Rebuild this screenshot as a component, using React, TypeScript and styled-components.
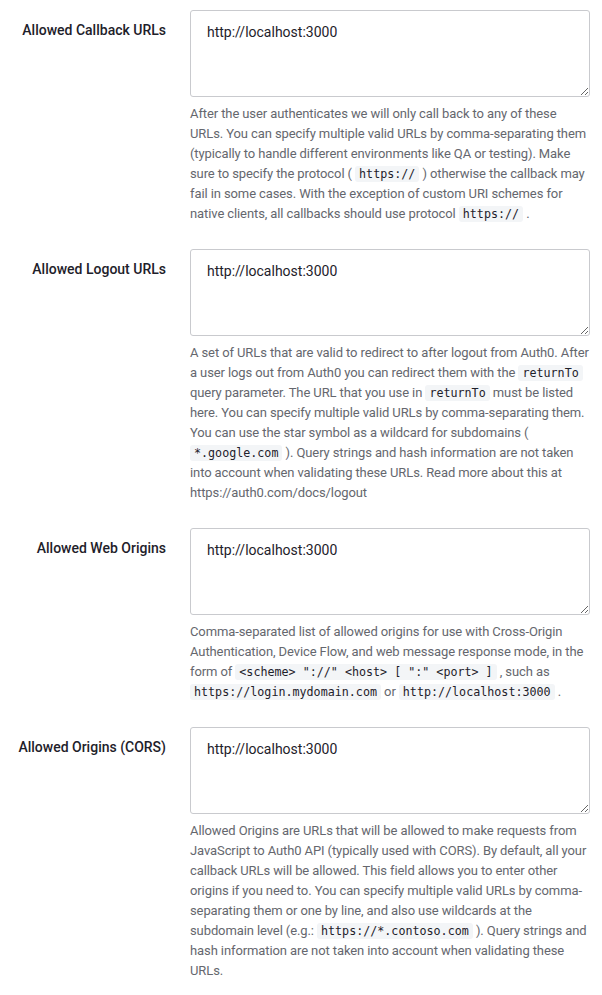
import React from "react";
import styled, { createGlobalStyle } from "styled-components";

const Global = createGlobalStyle`
  html, body { margin: 0; padding: 0; background: #fff; }
  body { font-family: Roboto, "Noto Sans", sans-serif; -webkit-font-smoothing: antialiased; }
`;

const Page = styled.div`
  padding-top: 10px;
  display: flex;
  flex-direction: column;
  gap: 25px;
`;

const Row = styled.div`
  display: grid;
  grid-template-columns: 166px 400px;
  column-gap: 24px;
  align-items: start;
`;

const Label = styled.label`
  text-align: right;
  font-size: 14px;
  font-weight: 500;
  line-height: 20px;
  color: #1e212a;
  padding-top: 10px;
  white-space: nowrap;
`;

const Field = styled.div`
  display: flex;
  flex-direction: column;
  gap: 7px;
`;

const Area = styled.textarea`
  box-sizing: border-box;
  width: 400px;
  height: 87px;
  margin: 0;
  padding: 11px 16px;
  border: 1px solid #c9cace;
  border-radius: 3px;
  font-family: Roboto, "Noto Sans", sans-serif;
  font-size: 14px;
  line-height: 20px;
  color: #1e212a;
  resize: vertical;
  outline: none;
`;

const Help = styled.p`
  margin: 0;
  font-size: 13px;
  letter-spacing: -0.1px;
  line-height: 20px;
  color: #65676e;
`;

const Code = styled.code`
  font-family: "DejaVu Sans Mono", "Liberation Mono", monospace;
  font-size: 11.7px;
  letter-spacing: 0;
  line-height: 16px;
  color: #1e212a;
  background: #f3f5f7;
  padding: 1px 4px;
  border-radius: 3px;
`;

const rows: { label: string; help: React.ReactNode }[] = [
  {
    label: "Allowed Callback URLs",
    help: (
      <>
        After the user authenticates we will only call back to any of these URLs. You can specify
        multiple valid URLs by comma-separating them (typically to handle different environments
        like QA or testing). Make sure to specify the protocol ( <Code>https://</Code> ) otherwise
        the callback may fail in some cases. With the exception of custom URI schemes for native
        clients, all callbacks should use protocol <Code>https://</Code> .
      </>
    ),
  },
  {
    label: "Allowed Logout URLs",
    help: (
      <>
        A set of URLs that are valid to redirect to after logout from Auth0. After a user logs out
        from Auth0 you can redirect them with the <Code>returnTo</Code> query parameter. The URL
        that you use in <Code>returnTo</Code> must be listed here. You can specify multiple valid
        URLs by comma-separating them. You can use the star symbol as a wildcard for subdomains ({" "}
        <Code>*.google.com</Code> ). Query strings and hash information are not taken into account
        when validating these URLs. Read more about this at https://auth0.com/docs/logout
      </>
    ),
  },
  {
    label: "Allowed Web Origins",
    help: (
      <>
        Comma-separated list of allowed origins for use with Cross-Origin Authentication, Device
        Flow, and web message response mode, in the form of{" "}
        <Code>&lt;scheme&gt; "://" &lt;host&gt; [ ":" &lt;port&gt; ]</Code> , such as{" "}
        <Code>https://login.mydomain.com</Code> or <Code>http://localhost:3000</Code> .
      </>
    ),
  },
  {
    label: "Allowed Origins (CORS)",
    help: (
      <>
        Allowed Origins are URLs that will be allowed to make requests from JavaScript to Auth0 API
        (typically used with CORS). By default, all your callback URLs will be allowed. This field
        allows you to enter other origins if you need to. You can specify multiple valid URLs by
        comma-separating them or one by line, and also use wildcards at the subdomain level (e.g.:{" "}
        <Code>https://*.contoso.com</Code> ). Query strings and hash information are not taken into
        account when validating these URLs.
      </>
    ),
  },
];

export default function App() {
  return (
    <>
      <Global />
      <Page>
        {rows.map((r) => (
          <Row key={r.label}>
            <Label>{r.label}</Label>
            <Field>
              <Area defaultValue="http://localhost:3000" />
              <Help>{r.help}</Help>
            </Field>
          </Row>
        ))}
      </Page>
    </>
  );
}
